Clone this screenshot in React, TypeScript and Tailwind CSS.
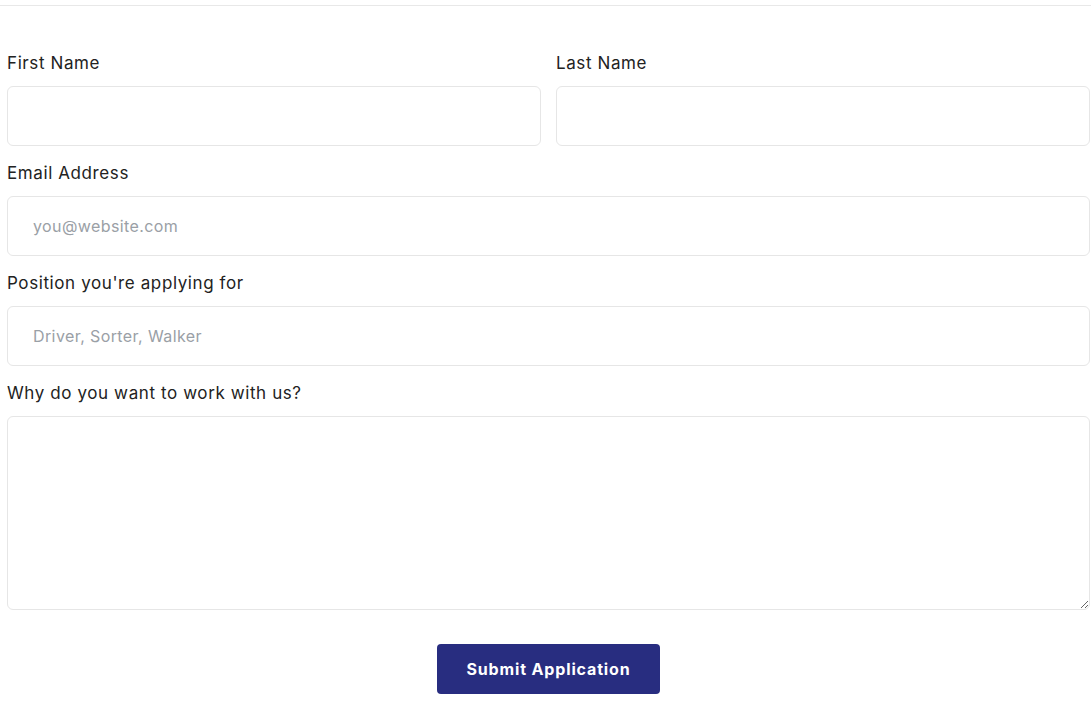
export default function App() {
  const inputCls =
    'w-full h-[60px] rounded-[6px] border border-[#e6e6e6] bg-white px-[25px] text-[16px] tracking-[0.4px] text-[#333] placeholder:text-[#9aa0a6] outline-none';
  const labelCls = 'block text-[17px] leading-6 mb-[11px] tracking-[0.6px] text-[#222]';

  return (
    <div className="min-h-[701px] bg-white font-['Inter','Liberation_Sans',sans-serif] text-[#222]">
      <div className="h-[6px] border-b border-[#e8e8e8]" />
      <form className="pl-[7px] pr-[1px] pt-[45px]" onSubmit={(e) => e.preventDefault()}>
        <div className="flex gap-[15px]">
          <div className="flex-1">
            <label className={labelCls}>First Name</label>
            <input type="text" className={inputCls} />
          </div>
          <div className="flex-1">
            <label className={labelCls}>Last Name</label>
            <input type="text" className={inputCls} />
          </div>
        </div>

        <div className="mt-[15px]">
          <label className={labelCls}>Email Address</label>
          <input type="email" placeholder="you@website.com" className={inputCls} />
        </div>

        <div className="mt-[15px]">
          <label className={labelCls}>Position you're applying for</label>
          <input type="text" placeholder="Driver, Sorter, Walker" className={inputCls} />
        </div>

        <div className="mt-[15px]">
          <label className={labelCls}>Why do you want to work with us?</label>
          <textarea className="block w-full h-[194px] rounded-[6px] border border-[#e6e6e6] bg-white px-[25px] py-3 text-[16px] outline-none" />
        </div>

        <div className="flex justify-center mt-[34px]">
          <button
            type="submit"
            className="w-[223px] h-[50px] rounded-[4px] bg-[#282d80] text-white text-[16px] font-bold tracking-[0.85px]"
          >
            Submit Application
          </button>
        </div>
      </form>
    </div>
  );
}
